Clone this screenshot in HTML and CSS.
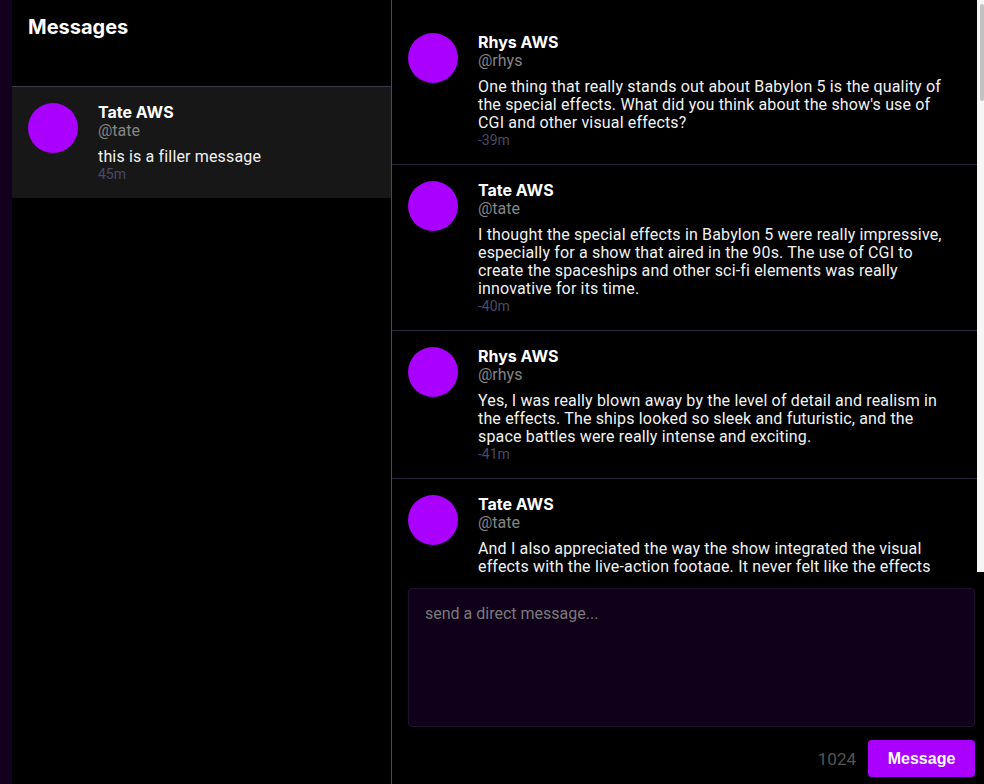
FILE: index.html
```html
<!DOCTYPE html>
<html lang="en">
<head>
<meta charset="utf-8">
<title>Messages</title>
<link rel="stylesheet" href="styles.css">
</head>
<body>
<div class="app">
  <nav class="strip"></nav>
  <aside class="inbox">
    <header class="inbox-head"><h1>Messages</h1></header>
    <div class="thread active">
      <div class="avatar"></div>
      <div class="body">
        <div class="name">Tate AWS</div>
        <div class="handle">@tate</div>
        <div class="text">this is a filler message</div>
        <div class="time">45m</div>
      </div>
    </div>
  </aside>
  <main class="chat">
    <div class="feed-wrap">
      <div class="feed">
        <div class="msg"><div class="avatar"></div><div class="body"><div class="name">Rhys AWS</div><div class="handle">@rhys</div><div class="text">One thing that really stands out about Babylon 5 is the quality of the special effects. What did you think about the show's use of CGI and other visual effects?</div><div class="time">-39m</div></div></div>
        <div class="msg"><div class="avatar"></div><div class="body"><div class="name">Tate AWS</div><div class="handle">@tate</div><div class="text">I thought the special effects in Babylon 5 were really impressive, especially for a show that aired in the 90s. The use of CGI to create the spaceships and other sci-fi elements was really innovative for its time.</div><div class="time">-40m</div></div></div>
        <div class="msg"><div class="avatar"></div><div class="body"><div class="name">Rhys AWS</div><div class="handle">@rhys</div><div class="text">Yes, I was really blown away by the level of detail and realism in the effects. The ships looked so sleek and futuristic, and the space battles were really intense and exciting.</div><div class="time">-41m</div></div></div>
        <div class="msg"><div class="avatar"></div><div class="body"><div class="name">Tate AWS</div><div class="handle">@tate</div><div class="text">And I also appreciated the way the show integrated the visual effects with the live-action footage. It never felt like the effects were out of place or distracting from the story.</div><div class="time">-42m</div></div></div>
        <div class="msg"><div class="avatar"></div><div class="body"><div class="name">Rhys AWS</div><div class="handle">@rhys</div><div class="text">Absolutely. The character development was excellent too. Londo and G'Kar had one of the best arcs I have ever seen on television.</div><div class="time">-43m</div></div></div>
        <div class="msg"><div class="avatar"></div><div class="body"><div class="name">Tate AWS</div><div class="handle">@tate</div><div class="text">Agreed. Their relationship went from bitter enemies to something much more complex and meaningful over the five seasons.</div><div class="time">-44m</div></div></div>
      </div>
      <div class="scrollbar" aria-hidden="true"><div class="thumb"></div></div>
    </div>
    <form class="composer">
      <textarea class="input" placeholder="send a direct message..."></textarea>
      <div class="actions">
        <span class="count">1024</span>
        <button type="button" class="send">Message</button>
      </div>
    </form>
  </main>
</div>
</body>
</html>
```
FILE: styles.css
```css
* { box-sizing: border-box; }
html, body {
  margin: 0;
  padding: 0;
  height: 100%;
  background: #000;
  color: #fff;
  font-family: Roboto, "Liberation Sans", sans-serif;
  font-size: 16px;
}
.app {
  display: flex;
  height: 100vh;
  overflow: hidden;
}
.strip {
  width: 12px;
  flex-shrink: 0;
  background: #12001e;
}
.inbox {
  width: 380px;
  flex-shrink: 0;
  border-right: 1px solid #4a4a56;
  display: flex;
  flex-direction: column;
}
.inbox-head {
  height: 87px;
  padding: 15px 16px 0;
  border-bottom: 1px solid #3a3a4a;
}
.inbox-head h1 {
  margin: 0;
  font-family: Inter, "Liberation Sans", sans-serif;
  font-weight: 700;
  font-size: 20px;
  line-height: 24px;
}
.thread {
  display: flex;
  gap: 20px;
  padding: 16px;
}
.thread.active { background: #171717; }
.avatar {
  width: 50px;
  height: 50px;
  border-radius: 50%;
  background: #aa00ff;
  flex-shrink: 0;
}
.body { min-width: 0; flex: 1; }
.msg .body { padding-right: 4px; }
.name {
  font-family: Inter, "Liberation Sans", sans-serif;
  font-weight: 700;
  font-size: 16px;
  line-height: 18px;
  color: #fff;
}
.handle {
  font-size: 16px;
  line-height: 19px;
  color: #858585;
}
.text {
  margin-top: 8px;
  font-size: 16px;
  line-height: 18px;
  letter-spacing: 0.16px;
  color: #f2f2f2;
}
.time {
  font-size: 14px;
  line-height: 16px;
  color: #4a4a66;
}
.chat {
  flex: 1;
  min-width: 0;
  display: flex;
  flex-direction: column;
}
.feed-wrap {
  height: 572px;
  flex-shrink: 0;
  display: flex;
}
.feed {
  flex: 1;
  min-width: 0;
  overflow: hidden;
  padding-top: 17px;
}
.scrollbar {
  width: 7px;
  flex-shrink: 0;
  background: #f6f6f6;
  padding: 4px 0 0 3px;
}
.thumb {
  width: 4px;
  height: 97px;
  background: #c2c2c2;
  border-radius: 2px;
}
.msg {
  display: flex;
  gap: 20px;
  padding: 16px;
  border-bottom: 1px solid #26263a;
}
.composer {
  padding: 16px 9px 0 16px;
  display: flex;
  flex-direction: column;
}
.input {
  display: block;
  width: 100%;
  height: 139px;
  resize: none;
  background: #10001a;
  border: 1px solid #22102f;
  border-radius: 4px;
  padding: 16px;
  color: #fff;
  font-family: Roboto, "Liberation Sans", sans-serif;
  font-size: 16px;
  line-height: 18px;
  outline: none;
}
.input::placeholder { color: #7a7a7a; }
.actions {
  margin-top: 13px;
  display: flex;
  justify-content: flex-end;
  align-items: center;
  gap: 12px;
}
.count {
  font-size: 17px;
  color: #555;
}
.send {
  height: 37px;
  width: 107px;
  border: none;
  border-radius: 4px;
  background: #aa00ff;
  color: #fff;
  font-family: "Liberation Sans", Arial, sans-serif;
  font-weight: 700;
  font-size: 16px;
  padding: 0;
  cursor: pointer;
}
```
